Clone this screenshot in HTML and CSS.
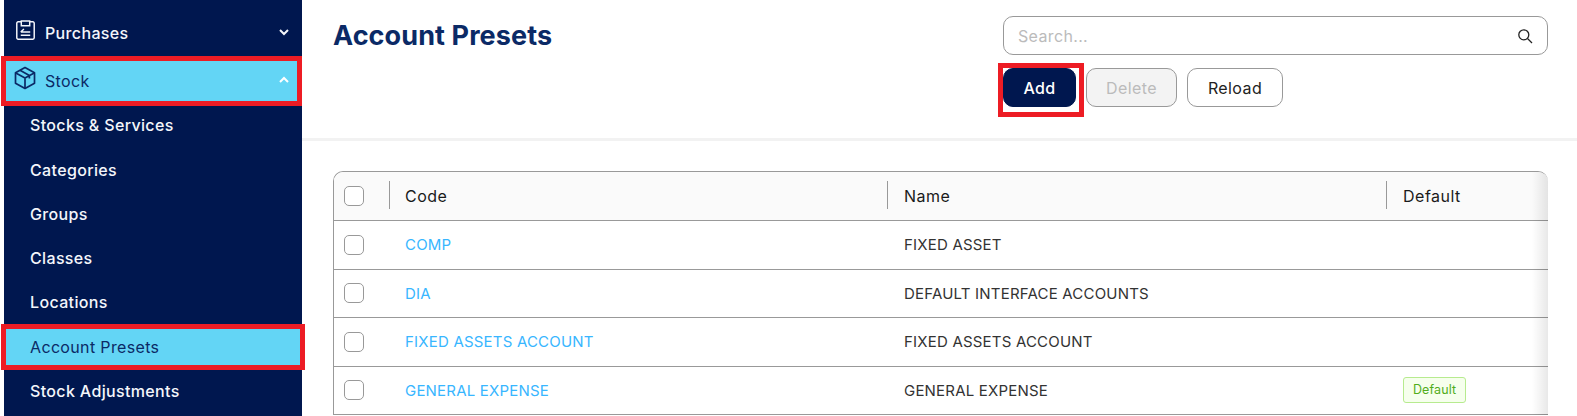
FILE: index.html
```html
<!DOCTYPE html>
<html lang="en">
<head>
  <meta charset="UTF-8" />
  <title>Account Presets</title>
  <link rel="stylesheet" href="styles.css">
</head>
<body>
  <nav class="sidebar">
    <a class="nav-item nav-top">
      <svg class="nav-icon icon-small" viewBox="0 0 20 20" fill="none" stroke="currentColor" stroke-width="1.4">
        <path d="M6 1.700H3A1.300 1.300 0 0 0 1.700 3v14A1.300 1.300 0 0 0 3 18.300h14a1.300 1.300 0 0 0 1.300-1.300V3A1.300 1.300 0 0 0 17 1.700h-3"/>
        <path d="M6 1h8v4.500H6z"/>
        <path d="M5.500 11.500h9M5.500 14.500h9M8.500 8.500l-3 3"/>
      </svg>
      <span>Purchases</span>
      <svg class="chevron" viewBox="0 0 12 12" fill="none" stroke="currentColor" stroke-width="2"><path d="M2 4l4 4 4-4"/></svg>
    </a>
    <a class="nav-item nav-top active nav-stock">
      <svg class="nav-icon" viewBox="0 0 24 24" fill="none" stroke="currentColor" stroke-width="1.700" stroke-linejoin="round">
        <path d="M12 1.500l9.500 5.300v10.400L12 22.500l-9.500-5.300V6.800z"/>
        <path d="M2.800 7L12 12l9.200-5M12 12v10.300M7 4.300l9.400 5.200v3"/>
      </svg>
      <span>Stock</span>
      <svg class="chevron chevron-up" viewBox="0 0 12 12" fill="none" stroke="currentColor" stroke-width="2"><path d="M2 8l4-4 4 4"/></svg>
      <i class="mark"></i>
    </a>
    <a class="nav-item">Stocks &amp; Services</a>
    <a class="nav-item">Categories</a>
    <a class="nav-item">Groups</a>
    <a class="nav-item">Classes</a>
    <a class="nav-item">Locations</a>
    <a class="nav-item active">Account Presets<i class="mark mark-wide"></i></a>
    <a class="nav-item">Stock Adjustments</a>
  </nav>

  <main class="content">
    <header class="page-head">
      <h1>Account Presets</h1>
      <div class="tools">
        <div class="search">
          <span>Search...</span>
          <svg viewBox="0 0 16 16" fill="none" stroke="#222" stroke-width="1.300"><circle cx="6.800" cy="6.800" r="5"/><path d="M10.500 10.500L15 15"/></svg>
        </div>
        <div class="buttons">
          <button class="btn btn-add">Add<i class="mark mark-btn"></i></button>
          <button class="btn btn-off">Delete</button>
          <button class="btn btn-reload">Reload</button>
        </div>
      </div>
    </header>

    <section class="table-wrap">
      <div class="row row-head">
        <div class="cell-check"><span class="check"></span></div>
        <div class="cell cell-code">Code</div>
        <div class="cell cell-name">Name</div>
        <div class="cell cell-default">Default</div>
      </div>
      <div class="row">
        <div class="cell-check"><span class="check"></span></div>
        <div class="cell cell-code"><a>COMP</a></div>
        <div class="cell cell-name">FIXED ASSET</div>
        <div class="cell cell-default"></div>
      </div>
      <div class="row">
        <div class="cell-check"><span class="check"></span></div>
        <div class="cell cell-code"><a>DIA</a></div>
        <div class="cell cell-name">DEFAULT INTERFACE ACCOUNTS</div>
        <div class="cell cell-default"></div>
      </div>
      <div class="row">
        <div class="cell-check"><span class="check"></span></div>
        <div class="cell cell-code"><a>FIXED ASSETS ACCOUNT</a></div>
        <div class="cell cell-name">FIXED ASSETS ACCOUNT</div>
        <div class="cell cell-default"></div>
      </div>
      <div class="row">
        <div class="cell-check"><span class="check"></span></div>
        <div class="cell cell-code"><a>GENERAL EXPENSE</a></div>
        <div class="cell cell-name">GENERAL EXPENSE</div>
        <div class="cell cell-default"><span class="tag">Default</span></div>
      </div>
      <div class="edge"></div>
    </section>
  </main>
</body>
</html>
```

FILE: styles.css
```css
html, body {
  margin: 0;
  height: 416px;
  overflow: hidden;
}
body {
  display: flex;
  background-color: white;
  font-family: 'Inter', 'Liberation Sans', sans-serif;
  font-size: 16px;
  letter-spacing: 0.35px;
  color: #222;
}
.sidebar {
  width: 298px;
  margin-left: 4px;
  flex-shrink: 0;
  padding-top: 13px;
  background-color: #00174f;
  display: flex;
  flex-direction: column;
  gap: 4.3px;
}
.nav-item {
  position: relative;
  display: flex;
  align-items: center;
  flex-shrink: 0;
  height: 40px;
  padding-left: 26px;
  color: #f4f6fb;
  font-weight: 500;
}
.nav-top {
  padding-left: 9px;
  padding-right: 12px;
}
.nav-stock {
  margin-top: 3.700px;
}
.nav-top span {
  flex: 1;
  margin-left: 8px;
}
.nav-icon {
  width: 24px;
  height: 24px;
  margin-top: -5px;
}
.icon-small {
  width: 21px;
  height: 21px;
  margin-left: 2px;
  margin-right: 1px;
}
.chevron {
  width: 12px;
  height: 12px;
  margin-top: -2px;
}
.chevron-up {
  color: white;
}
.active {
  background-color: #63d5f5;
  color: #0b2a66;
  font-weight: 400;
}
.mark {
  position: absolute;
  left: -3px;
  right: 0;
  top: -5px;
  bottom: -5px;
  border: 5px solid #ed1c24;
}
.mark-wide {
  right: -3px;
  top: -3px;
  bottom: -3px;
}
.mark-btn {
  left: -6px;
  right: -9px;
  top: -6px;
  bottom: -11px;
}

.content {
  flex: 1;
  min-width: 0;
}
.page-head {
  display: flex;
  justify-content: space-between;
  height: 122px;
  padding: 16px 29px 0 31px;
  border-bottom: 3px solid #f2f2f2;
}
.page-head h1 {
  margin: 3px 0 0;
  font-size: 27px;
  line-height: 34px;
  font-weight: 700;
  letter-spacing: 0.1px;
  color: #0b2a66;
}
.tools {
  width: 545px;
}
.search {
  display: flex;
  align-items: center;
  justify-content: space-between;
  height: 39px;
  box-sizing: border-box;
  padding: 0 14px;
  border: 1px solid #999;
  border-radius: 10px;
  color: #bbb;
}
.search svg {
  width: 16px;
  height: 16px;
}
.buttons {
  display: flex;
  gap: 10px;
  margin-top: 13px;
}
.btn {
  position: relative;
  height: 39px;
  padding: 0;
  border: 1px solid #999;
  border-radius: 10px;
  background: white;
  font: 400 16px 'Inter', 'Liberation Sans', sans-serif;
  letter-spacing: 0.4px;
  color: #222;
}
.btn-add {
  width: 73px;
  background-color: #00174f;
  border-color: #00174f;
  color: white;
  font-weight: 500;
}
.btn-off {
  width: 91px;
  background-color: #f3f3f3;
  color: #bbb;
}
.btn-reload {
  width: 96px;
}

.table-wrap {
  position: relative;
  margin: 30px 29px 0 31px;
  border-top: 1px solid #999;
  border-left: 1px solid #999;
  border-top-left-radius: 10px;
  border-top-right-radius: 10px;
  overflow: hidden;
}
.row {
  display: flex;
  align-items: center;
  height: 47.5px;
  border-bottom: 1px solid #999;
}
.row-head {
  height: 48px;
  background-color: #fafafa;
}
.cell-check {
  width: 55px;
  flex-shrink: 0;
  box-sizing: border-box;
  padding-left: 10px;
  display: flex;
}
.check {
  display: block;
  width: 20px;
  height: 20px;
  box-sizing: border-box;
  border: 1px solid #999;
  border-radius: 5px;
  background: white;
}
.cell {
  box-sizing: border-box;
  padding-left: 17px;
  font-size: 15px;
  letter-spacing: 0.2px;
  color: #333;
}
.row-head .cell {
  position: relative;
  font-size: 16px;
  letter-spacing: 0.5px;
  color: #1a1a1a;
}
.row-head .cell::before {
  content: "";
  position: absolute;
  left: 0;
  top: -5px;
  height: 28px;
  width: 1px;
  background-color: #999;
}
.cell-code {
  width: 498px;
  padding-left: 16px;
}
.row-head .cell-code {
  padding-left: 16px;
}
.cell-code a {
  color: #38b6ff;
}
.cell-name {
  width: 499px;
}
.cell-default {
  flex: 1;
}
.tag {
  display: inline-block;
  padding: 0 9px;
  height: 26px;
  line-height: 24px;
  box-sizing: border-box;
  border: 1px solid #b7eb8f;
  border-radius: 3px;
  background-color: #f6ffed;
  color: #52ad1c;
  font-size: 12.500px;
  letter-spacing: 0.1px;
}
.edge {
  position: absolute;
  right: 0;
  top: 0;
  bottom: 0;
  width: 16px;
  background: linear-gradient(to right, rgba(0,0,0,0), rgba(0,0,0,0.09));
}
```
